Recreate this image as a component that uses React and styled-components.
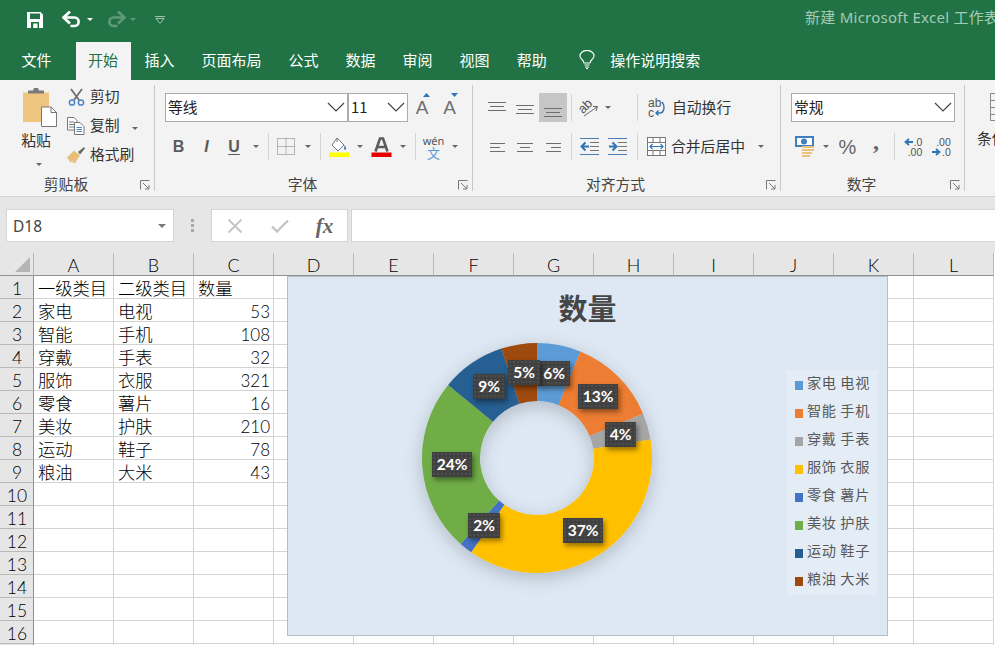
import React from 'react';
import styled, { createGlobalStyle } from 'styled-components';

const CJK = '"Noto Sans CJK SC", "Noto Sans", sans-serif';
const UI = '"Noto Sans", "Noto Sans CJK SC", sans-serif';
const NUM = 'Lato, "Noto Sans", sans-serif';

const Global = createGlobalStyle`
  html, body { margin: 0; padding: 0; width: 995px; height: 645px; overflow: hidden; background: #fff; }
  body { font-family: ${CJK}; }
  * { box-sizing: border-box; }
`;

const Page = styled.div`width: 995px; height: 645px; overflow: hidden; display: flex; flex-direction: column;`;

/* ---------- title bar ---------- */
const TitleBar = styled.div`
  height: 42px; flex: none; background: #217346; display: flex; align-items: center; padding: 0 0 3px 23px; overflow: hidden;
`;
const Qat = styled.div`
  flex: none; display: flex; align-items: center; justify-content: center; width: ${p => p.$w}px; margin-left: ${p => p.$ml || 0}px;
`;
const DocTitle = styled.div`
  flex: none; margin-left: 635px; margin-top: -6px; color: #a4cbb5; font: 15px/20px ${UI}; letter-spacing: .25px; white-space: nowrap;
`;

/* ---------- tabs ---------- */
const TabBar = styled.div`height: 38px; flex: none; background: #217346; display: flex; padding-left: 8px; align-items: stretch;`;
const Tab = styled.div`
  flex: none; padding: ${p => p.$active ? '0 13px 3px 12px' : '0 13.5px 3px'}; margin-left: ${p => p.$ml || 0}px;
  display: flex; align-items: center;
  font-size: 15px; line-height: 36px; color: ${p => p.$active ? '#217346' : '#fff'};
  background: ${p => p.$active ? '#f3f3f3' : 'transparent'};
`;
const Tell = styled.div`flex: none; margin-left: 19px; padding-bottom: 3px; display: flex; align-items: center; gap: 15px; color: #fff; font-size: 15px;`;

/* ---------- ribbon ---------- */
const Ribbon = styled.div`height: 117px; flex: none; background: #f3f3f3; border-bottom: 1px solid #d2d2d2; display: flex; overflow: hidden;`;
const Group = styled.div`
  flex: none; position: relative; width: ${p => p.$w}px; height: 106px; margin-top: 5px; padding: 8px 0 0 ${p => p.$pl || 0}px;
  border-right: ${p => p.$last ? 'none' : '1px solid #c8c8c8'};
  display: flex; flex-direction: column;
`;
const GroupLabel = styled.div`
  position: absolute; left: 0; right: 0; bottom: -2px; text-align: center; font-size: 14.8px; line-height: 18px; color: #444; padding-right: ${p => p.$pr || 0}px;
`;
const Launcher = styled.svg`position: absolute; right: 4px; bottom: 1px; width: 10px; height: 10px;`;
const Row = styled.div`display: flex; align-items: center; height: 29px; margin-top: ${p => p.$mt || 0}px; flex: none;`;
const Cell = styled.div`
  flex: none; width: ${p => p.$w}px; height: 29px; display: flex; align-items: center; justify-content: center;
  background: ${p => p.$on ? '#c6c6c6' : 'transparent'};
`;
const Sep = styled.div`flex: none; width: ${p => p.$w || 8}px; height: 27px; display: flex; justify-content: center;
  &::before { content: ''; width: 1px; background: #d4d4d4; }
`;
const Gap = styled.div`flex: none; width: ${p => p.$w}px;`;
const Combo = styled.div`
  flex: none; width: ${p => p.$w}px; height: 29px; background: #fff; border: 1px solid #ababab; margin-left: ${p => p.$ml || 0}px;
  display: flex; align-items: center; justify-content: space-between; padding: 0 2px 1px; font-size: 14.8px; line-height: 18px; color: #222;
`;
const ToolText = styled.span`font-size: 14.8px; line-height: 18px; color: #333; white-space: nowrap; padding-bottom: 2px;`;

const Clipboard = styled.div`display: flex; height: 100%;`;
const PasteBtn = styled.div`flex: none; width: 57px; margin: -5px 0 0 10px; display: flex; flex-direction: column; align-items: center;`;
const PasteLabel = styled.div`font-size: 14.8px; line-height: 18px; color: #333; margin-top: 3px; margin-left: -5px;`;
const PasteCaret = styled.div`margin-top: 10px; line-height: 0;`;
const SmallCol = styled.div`flex: none; display: flex; flex-direction: column; gap: 11px; margin-top: -5px;`;
const SmallBtn = styled.div`display: flex; align-items: center; height: 18px; gap: 5px;`;
const SmallIcon = styled.div`width: 18px; display: flex; justify-content: center;`;
const SmallCaret = styled.div`margin-left: 7px; line-height: 0;`;

const BoldLetter = styled.span`
  font: ${p => p.$i ? 'italic' : 'normal'} bold 16px/18px "Liberation Sans", sans-serif; color: #5a5a5a;
  text-decoration: ${p => p.$u ? 'underline' : 'none'}; text-underline-offset: 2px;
`;
const BigLetter = styled.span`font: 400 19px/20px "Liberation Sans", sans-serif; color: #6e6e6e; position: relative;`;
const Stack = styled.span`display: flex; flex-direction: column; align-items: center; line-height: 1;`;
const WenTop = styled.span`font: 11px/11px ${UI}; color: #555;`;
const WenBot = styled.span`font: 13px/13px ${CJK}; color: #5b9bd5;`;
const Glyph = styled.span`font: ${p => p.$s}px/20px "Liberation Sans", sans-serif; color: #666;`;
const Comma = styled.span`font: bold 24px/20px "Liberation Serif", serif; color: #666; margin-top: -12px;`;
const DecimalIcon = styled.span`display: grid; grid-template-columns: auto; justify-items: end; font: 10.5px/10px "Liberation Sans", sans-serif; color: #555; width: 18px;`;
const DecLine = styled.span`display: flex; align-items: center; gap: 1px;`;
const Cond = styled.div`display: flex; flex-direction: column; gap: 8px; padding-left: 12px;`;
const CondIcon = styled.svg`width: 40px; height: 28px; margin-left: 13px;`;
const CondText = styled.span`font-size: 14.8px; line-height: 18px; color: #333; white-space: nowrap;`;

/* ---------- formula bar ---------- */
const FormulaBar = styled.div`
  height: 56px; flex: none; background: #e6e6e6; padding: 12px 0 0 6px; display: flex; align-items: flex-start;
`;
const NameBox = styled.div`
  flex: none; width: 168px; height: 33px; background: #fff; border: 1px solid #d4d4d4; display: flex; align-items: center; justify-content: space-between;
  padding: 0 7px 0 6px; font: 15.5px/20px ${UI}; color: #444;
`;
const Grip = styled.div`flex: none; width: 37px; height: 33px; display: flex; flex-direction: column; align-items: center; justify-content: center; gap: 2px;
  & > i { width: 3px; height: 3px; background: #a8a8a8; display: block; }
`;
const FxBox = styled.div`
  flex: none; width: 137px; height: 33px; background: #fff; border: 1px solid #d4d4d4; display: flex; align-items: center;
`;
const FxCell = styled.div`flex: none; width: 45px; display: flex; justify-content: center; align-items: center;`;
const FxText = styled.span`font: italic bold 21px/20px "Liberation Serif", serif; color: #666;`;
const Input = styled.div`flex: 1; height: 33px; margin-left: 3px; background: #fff; border: 1px solid #d4d4d4; border-right: none;`;

/* ---------- sheet ---------- */
const Sheet = styled.div`position: relative; flex: 1; background: #fff; overflow: hidden;`;
const Grid = styled.div`display: grid; grid-template-columns: 34px repeat(12, 80px); grid-auto-rows: 23px;`;
const Corner = styled.div`background: #e6e6e6; border-right: 1px solid #b5b5b5; border-bottom: 1px solid #8f8f8f; display: flex; align-items: flex-end; justify-content: flex-end; padding: 0 3px 3px 0;`;
const ColHead = styled.div`
  background: #e6e6e6; border-right: 1px solid #b9b9b9; border-bottom: 1px solid #8f8f8f; text-align: center;
  font: 300 18px/25px ${NUM}; color: #000;
`;
const RowHead = styled.div`
  background: #e6e6e6; border-right: 1px solid #8f8f8f; border-bottom: 1px solid #b9b9b9; text-align: center;
  font: 300 17.5px/26px ${NUM}; color: #000; overflow: hidden; padding-left: 1px;
`;
const SheetCell = styled.div`
  border-right: 1px solid #d4d4d4; border-bottom: 1px solid #d4d4d4; padding: 0 3px 0 4px; overflow: visible; white-space: nowrap;
  text-align: ${p => p.$num ? 'right' : 'left'};
  font: 300 ${p => p.$num ? 17 : 17.3}px/${p => p.$num ? 25 : 24}px ${p => p.$num ? NUM : CJK}; color: #000;
`;

/* ---------- chart ---------- */
const Chart = styled.div`
  position: absolute; left: 287px; top: 23px; width: 601px; height: 360px; background: #dde8f4; border: 1px solid #b9bcc0;
  display: flex; flex-direction: column; align-items: center;
`;
const ChartTitle = styled.div`font: bold 29px/34px ${CJK}; color: #464646; margin-top: 13px;`;
const Donut = styled.svg`position: absolute; left: 114px; top: 46px; width: 270px; height: 270px; overflow: visible;`;
const DataLabel = styled.div`
  position: absolute; left: ${p => p.$x}px; top: ${p => p.$y}px; width: ${p => p.$w}px; height: 25px;
  display: flex; align-items: center; justify-content: center;
  background-color: #404040;
  background-image: radial-gradient(rgba(255,255,255,.07) .7px, transparent .9px);
  background-size: 4px 4px;
  box-shadow: 2px 3px 5px rgba(0,0,0,.42);
  color: #fff; font: 700 15.5px/25px Lato, sans-serif;
`;
const Legend = styled.div`
  position: absolute; left: 499px; top: 93px; width: 90px; height: 225px; background: #e4edf6;
  display: flex; flex-direction: column; padding: 0 0 0 8px;
`;
const LegendItem = styled.div`flex: none; height: 28px; display: flex; align-items: center; gap: 4px; color: #595959; font-size: 14.2px; letter-spacing: .6px; white-space: nowrap;`;
const LegendText = styled.span`margin-top: -5px; line-height: 18px;`;
const Swatch = styled.span`flex: none; width: 8px; height: 9px; margin-top: 2px; background: ${p => p.$c};`;

/* ---------- icons ---------- */
const Caret = ({ c = '#666', w = 6 }) => (
  <svg width={w} height={w / 2} viewBox="0 0 6 3"><path d="M0 0H6L3 3Z" fill={c} /></svg>
);
const Chevron = () => (
  <svg width="18" height="10" viewBox="0 0 18 10"><path d="M1 1L9 9L17 1" fill="none" stroke="#444" strokeWidth="1.2" /></svg>
);
const SaveIcon = () => (
  <svg width="16" height="16" viewBox="0 0 16 16">
    <path fillRule="evenodd" fill="#fff" d="M0 0H13.5L16 2.5V16H0ZM3 1.5V7H13V1.5ZM4 10V16H6.2V11.5H10.5V16H12V10Z" />
  </svg>
);
const UndoIcon = ({ c = '#fff' }) => (
  <svg width="19" height="17" viewBox="0 0 19 17">
    <path d="M2 6.5H12.5C18 6.5 18 15 12.5 15H8.5" fill="none" stroke={c} strokeWidth="2.6" />
    <path d="M8 .5L1.5 6.5L8 12.5" fill="none" stroke={c} strokeWidth="2.6" />
  </svg>
);
const Customize = () => (
  <svg width="10" height="8" viewBox="0 0 10 8"><path d="M0 .5H10M1 2.5H9L5 7.5Z" fill="none" stroke="#a0c6af" strokeWidth="1" /></svg>
);
const BulbIcon = () => (
  <svg width="16" height="19" viewBox="0 0 16 19" fill="none" stroke="#fff" strokeWidth="1.1">
    <path d="M5 13C5 10 1 9 1 6A7 5.6 0 0 1 15 6C15 9 11 10 11 13Z" />
    <path d="M5.5 15H10.5M6 17H10M7 18.5H9" />
  </svg>
);
const PasteIcon = () => (
  <svg width="36" height="40" viewBox="0 0 36 40">
    <path d="M2 4.5H28V34H2Z" fill="#efc680" />
    <path d="M7 5V2.5H12L13 0H17L18 2.5H23V5.5H7Z" fill="#7b7b7b" />
    <path d="M20.5 19H30L35.5 24.5V38.5H20.5Z" fill="#fff" stroke="#777" />
    <path d="M30 19V24.5H35.5" fill="none" stroke="#777" />
  </svg>
);
const ScissorsIcon = () => (
  <svg width="17" height="18" viewBox="0 0 17 18" fill="none">
    <path d="M3 1L11 12M14 1L6 12" stroke="#6e6e6e" strokeWidth="1.8" />
    <circle cx="4" cy="14.5" r="2.6" stroke="#4a86c5" strokeWidth="1.5" />
    <circle cx="13" cy="14.5" r="2.6" stroke="#4a86c5" strokeWidth="1.5" />
  </svg>
);
const CopyIcon = () => (
  <svg width="18" height="18" viewBox="0 0 18 18" fill="none">
    <path d="M.5.5H7L10 3.5V13H.5Z" fill="#fff" stroke="#777" />
    <path d="M2 5H7M2 7.5H7M2 10H7" stroke="#777" />
    <path d="M7.5 5.5H13L17 9.5V17.5H7.5Z" fill="#fff" stroke="#777" />
    <path d="M9.5 10.5H15M9.5 12.5H15M9.5 14.5H15" stroke="#4a86c5" />
  </svg>
);
const BrushIcon = () => (
  <svg width="18" height="16" viewBox="0 0 18 16">
    <path d="M11 5L17 0L18 1.5L13 7.5Z" fill="#6a6a6a" />
    <path d="M7 3.5L13 8.5L8 16H5.5L6 13.5L3.5 15.5L0 10.5Z" fill="#e8bd78" />
  </svg>
);
const LauncherIcon = () => (
  <Launcher viewBox="0 0 10 10" fill="none" stroke="#777">
    <path d="M.5 9.5V.5H9.5" />
    <path d="M3 3L8.5 8.5M9 5V9H5" />
  </Launcher>
);
const BordersIcon = () => (
  <svg width="18" height="17" viewBox="0 0 18 17" fill="none" stroke="#777" strokeDasharray="1 1">
    <path d="M.5.5H17.5V16.5H.5ZM9 .5V16.5M.5 8.5H17.5" />
  </svg>
);
const FillIcon = () => (
  <svg width="21" height="20" viewBox="0 0 21 20">
    <path d="M8 1L15 8L9 14L3 8Z" fill="#fff" stroke="#777" />
    <path d="M8 1V5" stroke="#777" />
    <path d="M15.5 8C17 10 17.5 11 17 12.5C16 13.5 14.8 12.5 15 11Z" fill="#4a86c5" />
    <rect x="0" y="15.5" width="20" height="4.5" fill="#ffff00" />
  </svg>
);
const FontColorIcon = () => (
  <svg width="21" height="20" viewBox="0 0 21 20">
    <path d="M4.5 14.5L9 1.5H12L16.5 14.5M6.5 10H14.5" fill="none" stroke="#5c5c5c" strokeWidth="2.6" />
    <rect x=".5" y="15.5" width="20" height="4.5" fill="#e60000" />
  </svg>
);
const Lines = ({ w = 18, h = 20, lines, c = '#6e6e6e' }) => (
  <svg width={w} height={h} viewBox={`0 0 ${w} ${h}`}>
    {lines.map(([x1, x2, y], i) => <path key={i} d={`M${x1} ${y + .5}H${x2}`} stroke={c} />)}
  </svg>
);
const OrientIcon = () => (
  <svg width="20" height="20" viewBox="0 0 20 20">
    <text x="0" y="13" transform="rotate(-45 6 10)" fontFamily="Liberation Sans" fontSize="13" fill="#555">ab</text>
    <path d="M5 18L18 9M14 8.5L18.5 8.5L17 13" fill="none" stroke="#666" />
  </svg>
);
const IndentIcon = ({ flip }) => (
  <svg width="19" height="17" viewBox="0 0 19 17">
    <path d="M0 .5H19M0 16.5H19" stroke="#4a7fb5" />
    <path d="M10 4.5H19M10 8.5H19M10 12.5H19" stroke="#777" />
    {flip
      ? <path d="M1 8.5H7M4.5 4.5L8.5 8.5L4.5 12.5" fill="none" stroke="#2e75b6" strokeWidth="2" />
      : <path d="M3 8.5H9M5.5 4.5L1.5 8.5L5.5 12.5" fill="none" stroke="#2e75b6" strokeWidth="2" />}
  </svg>
);
const WrapIcon = () => (
  <svg width="17" height="20" viewBox="0 0 17 20">
    <text x="0" y="9" fontFamily="Liberation Sans" fontSize="12" fill="#555">ab</text>
    <text x="0" y="19" fontFamily="Liberation Sans" fontSize="12" fill="#555">c</text>
    <path d="M14 4C17.5 8 16 15 12 15H8M10.5 12.5L8 15L10.5 17.5" fill="none" stroke="#2e75b6" strokeWidth="1.4" />
  </svg>
);
const MergeIcon = () => (
  <svg width="19" height="19" viewBox="0 0 19 19" fill="none">
    <rect x=".5" y=".5" width="18" height="18" fill="#fff" stroke="#777" />
    <path d="M.5 5.5H18.5M.5 13.5H18.5M6 .5V5.5M13 .5V5.5M6 13.5V18.5M13 13.5V18.5" stroke="#777" />
    <path d="M3 9.5H16M5.5 7L3 9.5L5.5 12M13.5 7L16 9.5L13.5 12" stroke="#2e75b6" strokeWidth="1.2" />
  </svg>
);
const CurrencyIcon = () => (
  <svg width="20" height="21" viewBox="0 0 20 21">
    <rect x="0" y="0" width="19" height="11" fill="#3f7fbf" />
    <rect x="2" y="2" width="15" height="7" fill="#fff" />
    <circle cx="9" cy="5.5" r="3" fill="#3f7fbf" />
    <path d="M7 11H19M7 14H19M7 17H17M7 20H15" stroke="#eec27c" strokeWidth="2" />
  </svg>
);
const SmallArrow = ({ right }) => (
  <svg width="9" height="8" viewBox="0 0 9 8">
    <path d={right ? 'M0 4H6M4 1L7.5 4L4 7' : 'M9 4H3M5 1L1.5 4L5 7'} fill="none" stroke="#2e75b6" strokeWidth="1.8" />
  </svg>
);
const Up = styled.svg`position: absolute; right: -2px; top: -5px;`;
const XIcon = () => <svg width="16" height="16" viewBox="0 0 16 16"><path d="M1.5 1.5L14.5 14.5M14.5 1.5L1.5 14.5" stroke="#c4c4c4" strokeWidth="1.8" /></svg>;
const CheckIcon = () => <svg width="18" height="14" viewBox="0 0 18 14"><path d="M1 7.5L6 12.5L17 1.5" fill="none" stroke="#c4c4c4" strokeWidth="2.4" /></svg>;
const CornerTri = () => <svg width="15" height="15" viewBox="0 0 15 15"><path d="M15 0V15H0Z" fill="#b5b5b5" /></svg>;
const FlipWrap = styled.span`display: inline-flex; transform: scaleX(-1);`;

/* ---------- data ---------- */
const tabs = ['插入', '页面布局', '公式', '数据', '审阅', '视图', '帮助'];
const sheet = [
  ['一级类目', '二级类目', '数量'],
  ['家电', '电视', 53], ['智能', '手机', 108], ['穿戴', '手表', 32], ['服饰', '衣服', 321],
  ['零食', '薯片', 16], ['美妆', '护肤', 210], ['运动', '鞋子', 78], ['粮油', '大米', 43],
];
const colors = ['#5b9bd5', '#ed7d31', '#a5a5a5', '#ffc000', '#4472c4', '#70ad47', '#255e91', '#9e480e'];
const labelPos = [[250, 84, 32], [290, 107, 40], [317, 145, 31], [275, 241, 40], [180, 236, 32], [144, 175, 40], [185, 97, 32], [220, 83, 32]];
const COLS = 'ABCDEFGHIJKL'.split('');

const polar = (r, a) => [135 + r * Math.sin(a), 135 - r * Math.cos(a)];
function arcs() {
  const rows = sheet.slice(1);
  const total = rows.reduce((s, r) => s + r[2], 0);
  let acc = 0;
  return rows.map((r, i) => {
    const a0 = acc / total * 2 * Math.PI;
    acc += r[2];
    const a1 = acc / total * 2 * Math.PI;
    const R = 115, q = 57, large = a1 - a0 > Math.PI ? 1 : 0;
    const [x0, y0] = polar(R, a0), [x1, y1] = polar(R, a1), [x2, y2] = polar(q, a1), [x3, y3] = polar(q, a0);
    return {
      key: i, d: `M${x0} ${y0}A${R} ${R} 0 ${large} 1 ${x1} ${y1}L${x2} ${y2}A${q} ${q} 0 ${large} 0 ${x3} ${y3}Z`,
      pct: Math.round(r[2] / total * 100) + '%', name: `${r[0]} ${r[1]}`,
    };
  });
}
const segs = arcs();

export default function App() {
  return (
    <Page>
      <Global />
      <TitleBar>
        <Qat $w={24}><SaveIcon /></Qat>
        <Qat $w={26} $ml={11}><UndoIcon /></Qat>
        <Qat $w={12}><Caret c="#fff" /></Qat>
        <Qat $w={26} $ml={7}><FlipWrap><UndoIcon c="#5d9a79" /></FlipWrap></Qat>
        <Qat $w={8}><Caret c="#5d9a79" /></Qat>
        <Qat $w={20} $ml={13}><Customize /></Qat>
        <DocTitle>新建 Microsoft Excel 工作表</DocTitle>
      </TitleBar>
      <TabBar>
        <Tab>文件</Tab>
        <Tab $active $ml={11}>开始</Tab>
        {tabs.map(t => <Tab key={t}>{t}</Tab>)}
        <Tell><BulbIcon />操作说明搜索</Tell>
      </TabBar>
      <Ribbon>
        <Group $w={155}>
          <Clipboard>
            <PasteBtn>
              <PasteIcon />
              <PasteLabel>粘贴</PasteLabel>
              <PasteCaret><Caret /></PasteCaret>
            </PasteBtn>
            <SmallCol>
              <SmallBtn><SmallIcon><ScissorsIcon /></SmallIcon><ToolText>剪切</ToolText></SmallBtn>
              <SmallBtn><SmallIcon><CopyIcon /></SmallIcon><ToolText>复制</ToolText><SmallCaret><Caret /></SmallCaret></SmallBtn>
              <SmallBtn><SmallIcon><BrushIcon /></SmallIcon><ToolText>格式刷</ToolText></SmallBtn>
            </SmallCol>
          </Clipboard>
          <GroupLabel $pr={22}>剪贴板</GroupLabel>
          <LauncherIcon />
        </Group>
        <Group $w={318} $pl={10}>
          <Row>
            <Combo $w={183}>等线<Chevron /></Combo>
            <Combo $w={60}>11<Chevron /></Combo>
            <Cell $w={28}><BigLetter>A<Up width="7" height="4" viewBox="0 0 7 4"><path d="M0 4L3.5 0L7 4Z" fill="#2e75b6" /></Up></BigLetter></Cell>
            <Cell $w={27}><BigLetter>A<Up width="7" height="4" viewBox="0 0 7 4"><path d="M0 0L3.5 4L7 0Z" fill="#2e75b6" /></Up></BigLetter></Cell>
          </Row>
          <Row $mt={10}>
            <Cell $w={27}><BoldLetter>B</BoldLetter></Cell>
            <Cell $w={29}><BoldLetter $i>I</BoldLetter></Cell>
            <Cell $w={26}><BoldLetter $u>U</BoldLetter></Cell>
            <Cell $w={18}><Caret /></Cell>
            <Sep $w={6} />
            <Cell $w={30}><BordersIcon /></Cell>
            <Cell $w={14}><Caret /></Cell>
            <Sep $w={10} />
            <Cell $w={28}><FillIcon /></Cell>
            <Cell $w={14}><Caret /></Cell>
            <Cell $w={29}><FontColorIcon /></Cell>
            <Cell $w={14}><Caret /></Cell>
            <Sep $w={10} />
            <Cell $w={27}><Stack><WenTop>wén</WenTop><WenBot>文</WenBot></Stack></Cell>
            <Cell $w={16}><Caret /></Cell>
          </Row>
          <GroupLabel $pr={22}>字体</GroupLabel>
          <LauncherIcon />
        </Group>
        <Group $w={308} $pl={10}>
          <Row>
            <Cell $w={28}><Lines lines={[[0, 18, 4], [2, 16, 8], [0, 18, 12]]} /></Cell>
            <Cell $w={28}><Lines lines={[[0, 18, 7], [2, 16, 11], [0, 18, 15]]} /></Cell>
            <Cell $w={28} $on><Lines lines={[[0, 18, 10], [2, 16, 14], [0, 18, 18]]} /></Cell>
            <Sep />
            <Cell $w={28}><OrientIcon /></Cell>
            <Cell $w={10}><Caret /></Cell>
            <Gap $w={20} />
            <Sep />
            <Cell $w={31}><WrapIcon /></Cell>
            <ToolText>自动换行</ToolText>
          </Row>
          <Row $mt={10}>
            <Cell $w={28}><Lines lines={[[0, 15, 6], [0, 10, 10], [0, 15, 14]]} w={15} /></Cell>
            <Cell $w={28}><Lines lines={[[0, 16, 6], [3, 13, 10], [0, 16, 14]]} w={16} /></Cell>
            <Cell $w={28}><Lines lines={[[0, 15, 6], [5, 15, 10], [0, 15, 14]]} w={15} /></Cell>
            <Sep />
            <Cell $w={28}><IndentIcon /></Cell>
            <Cell $w={28}><IndentIcon flip /></Cell>
            <Gap $w={2} />
            <Sep />
            <Cell $w={30}><MergeIcon /></Cell>
            <ToolText>合并后居中</ToolText>
            <Gap $w={13} />
            <Caret />
          </Row>
          <GroupLabel $pr={22}>对齐方式</GroupLabel>
          <LauncherIcon />
        </Group>
        <Group $w={184} $pl={10}>
          <Row><Combo $w={164}>常规<Chevron /></Combo></Row>
          <Row $mt={10}>
            <Cell $w={28}><CurrencyIcon /></Cell>
            <Cell $w={14}><Caret /></Cell>
            <Cell $w={29}><Glyph $s={20}>%</Glyph></Cell>
            <Cell $w={28}><Comma>,</Comma></Cell>
            <Sep />
            <Cell $w={29}><DecimalIcon><DecLine><SmallArrow />.0</DecLine>.00</DecimalIcon></Cell>
            <Cell $w={28}><DecimalIcon>.00<DecLine><SmallArrow right />.0</DecLine></DecimalIcon></Cell>
          </Row>
          <GroupLabel $pr={22}>数字</GroupLabel>
          <LauncherIcon />
        </Group>
        <Group $w={31} $last>
          <Cond>
            <CondIcon viewBox="0 0 40 28" fill="none" stroke="#888"><path d="M.5.5H39.5V27.5H.5ZM.5 7.5H39.5M.5 14.5H39.5M.5 21.5H39.5M12.5 .5V27.5" /></CondIcon>
            <CondText>条件格式</CondText>
          </Cond>
        </Group>
      </Ribbon>
      <FormulaBar>
        <NameBox>D18<Caret c="#777" w={8} /></NameBox>
        <Grip><i /><i /><i /></Grip>
        <FxBox>
          <FxCell><XIcon /></FxCell>
          <FxCell><CheckIcon /></FxCell>
          <FxCell><FxText>fx</FxText></FxCell>
        </FxBox>
        <Input />
      </FormulaBar>
      <Sheet>
        <Grid>
          <Corner><CornerTri /></Corner>
          {COLS.map(c => <ColHead key={c}>{c}</ColHead>)}
          {Array.from({ length: 17 }, (_, r) => (
            <React.Fragment key={r}>
              <RowHead>{r + 1}</RowHead>
              {COLS.map((c, ci) => {
                const v = sheet[r] ? sheet[r][ci] : undefined;
                return <SheetCell key={c} $num={typeof v === 'number'}>{v}</SheetCell>;
              })}
            </React.Fragment>
          ))}
        </Grid>
        <Chart>
          <ChartTitle>数量</ChartTitle>
          <Donut viewBox="0 0 270 270">
            <defs>
              <filter id="soft" x="-20%" y="-20%" width="140%" height="140%">
                <feDropShadow dx="0" dy="5" stdDeviation="9" floodColor="#000" floodOpacity=".2" />
              </filter>
            </defs>
            <g filter="url(#soft)">
              {segs.map((s, i) => <path key={s.key} d={s.d} fill={colors[i]} />)}
            </g>
          </Donut>
          {segs.map((s, i) => (
            <DataLabel key={s.key} $x={labelPos[i][0]} $y={labelPos[i][1]} $w={labelPos[i][2]}>{s.pct}</DataLabel>
          ))}
          <Legend>
            {segs.map((s, i) => (
              <LegendItem key={s.key}><Swatch $c={colors[i]} /><LegendText>{s.name}</LegendText></LegendItem>
            ))}
          </Legend>
        </Chart>
      </Sheet>
    </Page>
  );
}
